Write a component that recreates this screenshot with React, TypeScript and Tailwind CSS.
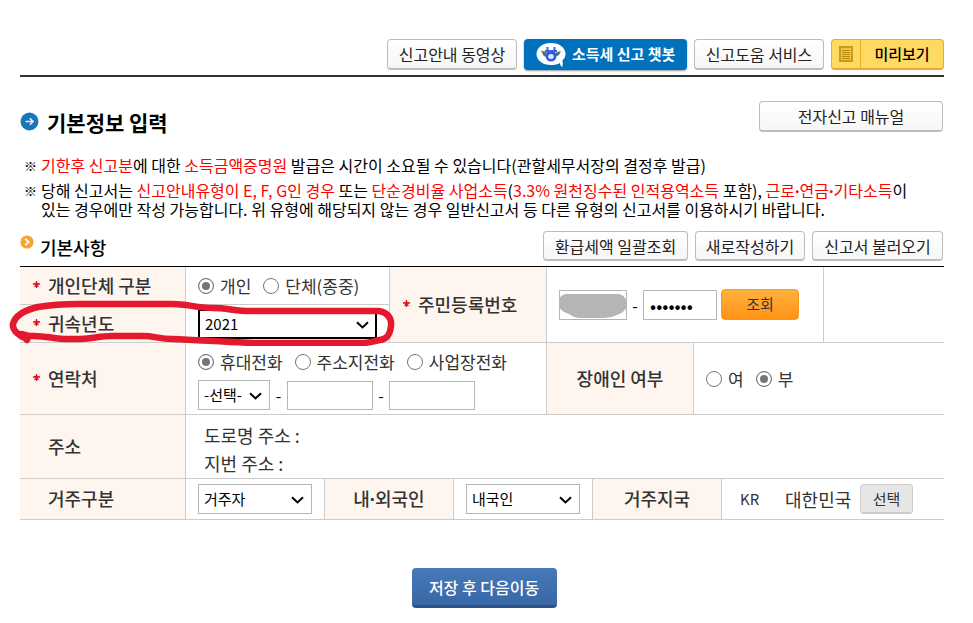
import type { ReactNode } from 'react';

interface SelectBoxProps {
  label: string;
  options: string[];
  className: string;
}

interface RadioProps {
  name: string;
  label: string;
  checked?: boolean;
}

interface HeadCellProps {
  children: ReactNode;
  required?: boolean;
  center?: boolean;
  colSpan?: number;
  rowSpan?: number;
}

const columns = ['w-[165px]', 'w-[139px]', 'w-[65px]', 'w-[64px]', 'w-[93px]', 'w-[46px]', 'w-[101px]', 'w-[28px]', 'w-[102px]', ''];

const cell = 'border-b border-l border-[#ccc] pl-3 align-middle';
const textInput = 'border border-[#b5b5b5] bg-white text-black';

function GrayButton({ children, className = '' }: { children: ReactNode; className?: string }) {
  return (
    <button
      type="button"
      className={`rounded-sm border border-b-2 border-[#bdbdbd] bg-linear-to-b from-white to-[#f6f6f6] whitespace-nowrap text-[#222] ${className}`}
    >
      {children}
    </button>
  );
}

function SelectBox({ label, options, className }: SelectBoxProps) {
  return (
    <div className="relative inline-block align-middle">
      <select aria-label={label} className={`block h-[30px] appearance-none bg-white pl-[5px] text-[15px] leading-5 text-black ${className}`}>
        {options.map((option) => (
          <option key={option}>{option}</option>
        ))}
      </select>
      <svg className="pointer-events-none absolute top-3 right-2 h-2 w-[13px]" viewBox="0 0 13 8" fill="none">
        <path d="M1 1.2 6.5 6.4 12 1.2" stroke="#000" strokeWidth="2" />
      </svg>
    </div>
  );
}

function Radio({ name, label, checked }: RadioProps) {
  return (
    <label className="flex items-center gap-1.5 text-[17px] leading-6 whitespace-nowrap text-[#333]">
      <input
        type="radio"
        name={name}
        defaultChecked={checked}
        className="size-4 shrink-0 appearance-none rounded-full border border-[#767676] bg-white checked:bg-[#767676] checked:shadow-[inset_0_0_0_3px_white]"
      />
      {label}
    </label>
  );
}

function HeadCell({ children, required, center, colSpan, rowSpan }: HeadCellProps) {
  return (
    <th
      scope="row"
      colSpan={colSpan}
      rowSpan={rowSpan}
      className={`border-b border-l border-[#ccc] bg-[#fff5ef] pb-0.5 text-[18px] leading-6 font-medium text-[#333] first:border-l-0 ${
        center ? 'text-center' : 'text-left'
      }`}
    >
      {required ? (
        <span className="flex items-center pl-[13px]">
          <span className="w-[15px]">
            <svg className="size-[7px]" viewBox="0 0 7 7" aria-hidden="true">
              <path d="M3.5 0v7M0 3h7M1.5 5.8l4-3.8M5.5 5.8l-4-3.8" stroke="#d9111c" strokeWidth="1.3" />
            </svg>
          </span>
          <span>{children}</span>
        </span>
      ) : (
        <span className={center ? '' : 'pl-7'}>{children}</span>
      )}
    </th>
  );
}

function Red({ children }: { children: ReactNode }) {
  return <span className="text-[#f00]">{children}</span>;
}

// the Korean face draws a wide middle dot, so take the Latin one
function Dot() {
  return <span className="font-['Open_Sans',sans-serif] leading-none font-bold">·</span>;
}

function ChatbotIcon() {
  return (
    <svg className="h-6 w-[30px]" viewBox="0 0 30 24" aria-hidden="true">
      <path d="M15 0C6.500 0 .5 4.800.5 11S6.500 22 15 22c3.500 0 6.500-.8 8.800-2.100.2 1.600 1 2.900 2.400 4.100.7-2.300.8-4.300.2-6.600C28.500 15.500 29.500 13.400 29.500 11 29.500 4.800 23.500 0 15 0Z" fill="#fff" />
      <path d="M5 7.500l5 1.500 2 4-4 .5ZM25 8l-5 1.500-1 4.500 4-2Z" fill="#3f7d63" />
      <circle cx="15" cy="13" r="5.500" fill="#2f58e6" />
      <path d="M9 8h12M11.500 4v4M18.500 4v4" stroke="#3f62d9" strokeWidth="2" />
      <ellipse cx="15" cy="13.500" rx="2.800" ry="2.500" fill="#dce8ff" />
    </svg>
  );
}

function PageHeader() {
  return (
    <header className="flex justify-end gap-[7px] border-b-2 border-[#333] pt-[39px] pb-[5px]">
      <GrayButton className="h-[31px] w-[130px]">신고안내 동영상</GrayButton>
      <button
        type="button"
        className="flex h-[31px] w-[163px] items-center gap-1.5 rounded-[4px] bg-[#0071bc] pl-3 text-[15px] font-bold whitespace-nowrap text-white shadow-[0_1px_2px_#999]"
      >
        <ChatbotIcon />
        소득세 신고 챗봇
      </button>
      <GrayButton className="h-[31px] w-[130px]">신고도움 서비스</GrayButton>
      <button
        type="button"
        className="flex h-[31px] w-[113px] items-stretch rounded-sm border border-b-2 border-[#e5ac33] bg-[#ffda63] text-[15px] font-medium whitespace-nowrap text-black"
      >
        <span className="flex w-[29px] items-center justify-center border-r border-[#f2ad26]">
          <svg className="h-4 w-3.5" viewBox="0 0 14 16" aria-hidden="true">
            <path d="M0 0h14v16H0z" fill="#c99c16" />
            <path d="M2 2h10v12H2z" fill="#f0c63f" />
            <path d="M3 4.500h8M3 6.500h8M3 8.500h8M3 10.500h8M3 12.500h8" stroke="#b88c0d" />
          </svg>
        </span>
        <span className="flex flex-1 items-center justify-center">미리보기</span>
      </button>
    </header>
  );
}

function Notices() {
  return (
    <div className="mt-6 space-y-1.5 pl-1 leading-[19px] whitespace-nowrap text-black">
      <p className="flex">
        <span className="w-[17px] text-[13px] font-bold">※</span>
        <span>
          <Red>기한후 신고분</Red>에 대한 <Red>소득금액증명원</Red> 발급은 시간이 소요될 수 있습니다(관할세무서장의 결정후 발급)
        </span>
      </p>
      <p className="flex">
        <span className="w-[17px] text-[13px] font-bold">※</span>
        <span>
          당해 신고서는 <Red>신고안내유형이 E, F, G인 경우</Red> 또는 <Red>단순경비율 사업소득</Red>(
          <Red>3.3% 원천징수된 인적용역소득</Red> 포함),{' '}
          <Red>
            근로
            <Dot />
            연금
            <Dot />
            기타소득
          </Red>
          이
          <br />
          있는 경우에만 작성 가능합니다. 위 유형에 해당되지 않는 경우 일반신고서 등 다른 유형의 신고서를 이용하시기 바랍니다.
        </span>
      </p>
    </div>
  );
}

function BasicInfoTable() {
  return (
    <div className="relative mt-[5px]">
      <table className="w-full table-fixed border-separate border-spacing-0 border-t border-black">
        <colgroup>
          {columns.map((width, index) => (
            <col key={index} className={width} />
          ))}
        </colgroup>
        <tbody>
          <tr className="h-[38px]">
            <HeadCell required>개인단체 구분</HeadCell>
            <td colSpan={2} className={cell}>
              <div className="flex gap-3">
                <Radio name="kind" label="개인" checked />
                <Radio name="kind" label="단체(종중)" />
              </div>
            </td>
            <HeadCell required colSpan={2} rowSpan={2}>주민등록번호</HeadCell>
            <td colSpan={4} rowSpan={2} className={cell}>
              <div className="flex items-center">
                <div className="relative">
                  <input aria-label="주민등록번호 앞자리" className={`${textInput} block h-[30px] w-[68px] text-[15px]`} />
                  <svg className="pointer-events-none absolute inset-0 h-[30px] w-[68px]" viewBox="0 0 68 30">
                    <path d="M7 4H60Q67 6 67.500 12V17Q66 22 58 25Q52 28 45 28H22Q15 28 10 24Q0 21 0 15V10Q1 5 7 4Z" fill="#b5b5b5" />
                  </svg>
                </div>
                <span className="w-4 text-center">-</span>
                <input aria-label="주민등록번호 뒷자리" type="password" defaultValue="1234567" className={`${textInput} h-[30px] w-[74px] pl-1.5 text-[18px]`} />
                <button
                  type="button"
                  className="ml-1 h-[31px] w-[78px] rounded-sm border border-[#f79a20] bg-linear-to-b from-[#ffb13b] to-[#ff9210] text-[15px] text-[#333]"
                >
                  조회
                </button>
              </div>
            </td>
            <td rowSpan={2} className={cell} />
          </tr>
          <tr className="h-[38px]">
            <HeadCell required>귀속년도</HeadCell>
            <td colSpan={2} className={cell}>
              <SelectBox label="귀속년도" options={['2021', '2020', '2019']} className="w-[179px] rounded-xs border-2 border-black" />
            </td>
          </tr>
          <tr className="h-[72px]">
            <HeadCell required>연락처</HeadCell>
            <td colSpan={4} className={`${cell} pt-[3px]`}>
              <div className="flex gap-3">
                <Radio name="phone" label="휴대전화" checked />
                <Radio name="phone" label="주소지전화" />
                <Radio name="phone" label="사업장전화" />
              </div>
              <div className="mt-1.5 flex items-center">
                <SelectBox label="국번" options={['-선택-', '010', '011']} className="w-[72px] border border-[#b5b5b5]" />
                <span className="w-[17px] text-center">-</span>
                <input aria-label="연락처 가운데 자리" className={`${textInput} h-[29px] w-[86px] text-[15px]`} />
                <span className="w-4 text-center">-</span>
                <input aria-label="연락처 끝자리" className={`${textInput} h-[29px] w-[86px] text-[15px]`} />
              </div>
            </td>
            <HeadCell center colSpan={2}>장애인 여부</HeadCell>
            <td colSpan={3} className={cell}>
              <div className="flex gap-3">
                <Radio name="disabled" label="여" />
                <Radio name="disabled" label="부" checked />
              </div>
            </td>
          </tr>
          <tr className="h-[64px]">
            <HeadCell>주소</HeadCell>
            <td colSpan={9} className={`${cell} pt-1 text-[18px] leading-7 text-[#333]`}>
              <p className="pl-1.5">도로명 주소 :</p>
              <p className="pl-1.5">지번 주소 :</p>
            </td>
          </tr>
          <tr className="h-[41px]">
            <HeadCell>거주구분</HeadCell>
            <td className={cell}>
              <SelectBox label="거주구분" options={['거주자', '비거주자']} className="w-[114px] border border-[#b5b5b5]" />
            </td>
            <HeadCell center colSpan={2}>
              내
              <Dot />
              외국인
            </HeadCell>
            <td colSpan={2} className={cell}>
              <SelectBox label="내·외국인" options={['내국인', '외국인']} className="w-[114px] border border-[#b5b5b5]" />
            </td>
            <HeadCell center colSpan={2}>거주지국</HeadCell>
            <td colSpan={2} className={cell}>
              <div className="flex items-center pl-1.5 text-[18px] leading-6 text-[#333]">
                <span className="w-[45px] text-[15px]">KR</span>
                <span className="w-[75px]">대한민국</span>
                <button type="button" className="h-[30px] w-[53px] rounded-sm border border-b-2 border-[#ccc] bg-[#e6e6e6] text-[15px]">
                  선택
                </button>
              </div>
            </td>
          </tr>
        </tbody>
      </table>
      {/* red marker ring round the year row */}
      <svg className="pointer-events-none absolute top-8 -left-3 h-12 w-[392px]" viewBox="0 0 392 48" fill="none">
        <path
          d="M19 41C11 38 4 32 5 26C7 18 17 12 30 9C42 7 55 6 70 6L165 6C178 6 190 10 205 10C218 10 228 13 242 13L371 13C379 14 384 20 383 28C382 37 379 41 372 42C367 43 361 45 354 45H245C217 44 190 42 165 41C150 41 147 38 135 38H104C90 38 80 42 63 41C49 42 37 37 23 38C18 38 16 36 13 36L19 42"
          stroke="#e5192d"
          strokeWidth="6.500"
          strokeLinecap="round"
          strokeLinejoin="round"
        />
      </svg>
    </div>
  );
}

export default function App() {
  return (
    <div className="bg-white pr-[29px] pl-5 font-['Noto_Sans_CJK_KR',sans-serif] text-[16px]">
      <PageHeader />
      <main>
        <div className="mt-6 flex justify-between pr-px">
          <h1 className="flex items-center gap-2 pt-2.5 text-[21px] leading-5 font-bold text-black">
            <svg className="size-[19px]" viewBox="0 0 19 19" aria-hidden="true">
              <circle cx="9.500" cy="9.500" r="9" fill="#1976b8" />
              <path d="M5.500 9.500h7.500M9.800 6.200l3.300 3.300-3.300 3.300" stroke="#e4f0f8" strokeWidth="1.600" fill="none" />
            </svg>
            기본정보 입력
          </h1>
          <GrayButton className="h-[31px] w-[184px]">전자신고 매뉴얼</GrayButton>
        </div>
        <Notices />
        <div className="mt-3 flex gap-[7px] pr-px">
          <h2 className="mr-auto flex gap-1.5 pt-1 text-[18px] leading-6 font-medium text-black">
            <svg className="size-3.5" viewBox="0 0 14 14" aria-hidden="true">
              <circle cx="7" cy="7" r="6.600" fill="#f7a530" />
              <path d="M5.200 3.800 8.700 7l-3.500 3.200" stroke="#fff" strokeWidth="1.800" fill="none" />
            </svg>
            기본사항
          </h2>
          <GrayButton className="h-[30px] w-[145px]">환급세액 일괄조회</GrayButton>
          <GrayButton className="h-[30px] w-[110px]">새로작성하기</GrayButton>
          <GrayButton className="h-[30px] w-[131px]">신고서 불러오기</GrayButton>
        </div>
        <BasicInfoTable />
        <div className="mt-12 flex justify-center pl-1">
          <button
            type="button"
            className="h-10 w-[145px] rounded-[4px] border-b-3 border-[#2c5489] bg-linear-to-b from-[#4579b9] to-[#3a68a6] font-medium whitespace-nowrap text-white"
          >
            저장 후 다음이동
          </button>
        </div>
      </main>
    </div>
  );
}
